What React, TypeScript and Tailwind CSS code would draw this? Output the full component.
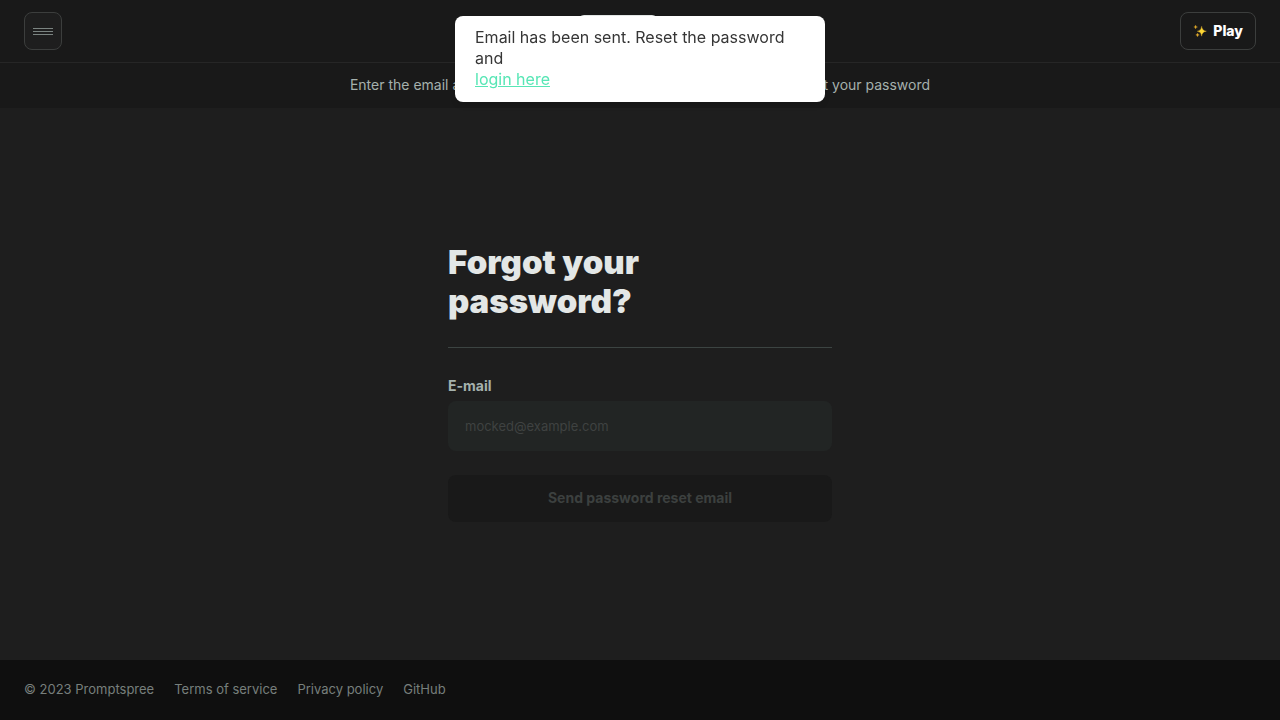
import React from "react";

function Sparkles() {
  return (
    <svg width="14" height="14" viewBox="0 0 14 14" aria-hidden="true">
      <path d="M8.7 2.2Q9 6.7 13.4 7.2Q9 7.7 8.7 12.2Q8.4 7.7 4.2 7.2Q8.4 6.7 8.7 2.2Z" fill="#fdd835" stroke="#f4b82b" strokeWidth="0.3" />
      <path d="M2.6 1Q2.9 2.8 4.6 3Q2.9 3.2 2.6 5Q2.3 3.2 0.7 3Q2.3 2.8 2.6 1Z" fill="#e0a92b" stroke="#e0a92b" strokeWidth="0.2" />
      <path d="M4.5 9Q4.8 10.7 6.4 10.9Q4.8 11.1 4.5 12.9Q4.2 11.1 2.7 10.9Q4.2 10.7 4.5 9Z" fill="#e0a92b" stroke="#e0a92b" strokeWidth="0.2" />
    </svg>
  );
}

function Header() {
  return (
    <header className="grid grid-cols-3 items-center border-b border-[#262626] bg-[#191919] px-6 py-3">
      <button
        type="button"
        aria-label="Menu"
        className="flex size-[38px] flex-col items-center justify-center gap-[2px] rounded-lg border border-[#3c3e3d] bg-[#1e1e1e]"
      >
        <span className="h-px w-5 bg-[#7b8481]" />
        <span className="h-px w-5 bg-[#7b8481]" />
        <span className="h-px w-5 bg-[#7b8481]" />
      </button>
      <a href="#" aria-label="Promptspree" className="mr-11 h-8 w-20 justify-self-center rounded-md bg-[#e3e7e6]" />
      <a
        href="#play"
        className="flex h-[38px] items-center gap-[6px] justify-self-end rounded-lg border border-[#3c3e3d] px-3 text-sm font-extrabold text-white"
      >
        <Sparkles />
        Play
      </a>
    </header>
  );
}

function Toast() {
  return (
    <div
      role="status"
      className="fixed top-4 left-1/2 w-[370px] -translate-x-1/2 rounded-lg bg-white px-5 pt-[11px] pb-3 text-base leading-[21px] text-[#363636] shadow-md"
    >
      <p>
        Email has been sent. Reset the password and
        <br />
        <a href="#login" className="text-[#57e6b5] underline">login here</a>
      </p>
    </div>
  );
}

function ResetForm() {
  return (
    <form className="flex w-96 flex-col">
      <h1 className="border-b border-[#3c4442] pb-[26px] text-[33px] leading-[39px] font-black text-[#e3e7e6]">
        Forgot your
        <br />
        password?
      </h1>
      <label htmlFor="email" className="pt-7 text-sm leading-5 font-bold text-[#a5b1ad]">
        E-mail
      </label>
      <input
        id="email"
        type="email"
        placeholder="mocked@example.com"
        className="mt-[5px] h-[50px] rounded-lg bg-[#222524] px-[17px] text-[13px] text-[#e3e7e6] outline-none placeholder:text-[#3f4241]"
      />
      <button
        type="submit"
        disabled
        className="mt-6 h-[47px] rounded-lg bg-[#191919] text-sm font-bold text-[#3c403f]"
      >
        Send password reset email
      </button>
    </form>
  );
}

export default function App() {
  return (
    <div className="flex min-h-screen flex-col bg-[#1e1e1e] font-['Inter',sans-serif]">
      <Header />
      <p className="bg-[#191919] pt-[11px] pb-[13px] text-center text-sm leading-[21px] text-[#a5b1ad]">
        Enter the email address of your account and get a link that lets you reset your password
      </p>
      <main className="flex flex-1 items-center justify-center pb-1">
        <ResetForm />
      </main>
      <footer className="flex h-[60px] items-center gap-5 bg-[#0f0f0f] px-6 text-[13px] text-[#777f7c]">
        <span>© 2023 Promptspree</span>
        <a href="#terms">Terms of service</a>
        <a href="#privacy">Privacy policy</a>
        <a href="#github">GitHub</a>
      </footer>
      <Toast />
    </div>
  );
}
